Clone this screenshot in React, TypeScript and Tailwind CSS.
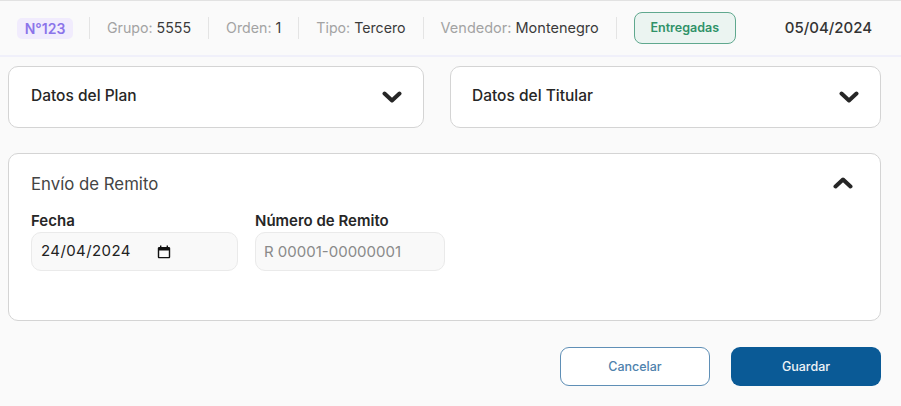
import React from 'react';

const Separator = () => <div className="w-px h-[22px] bg-[#e4e4e4] mx-[17px]" />;

const Chevron = ({ up = false }: { up?: boolean }) => (
  <svg width="20" height="12" viewBox="0 0 20 12" className={up ? 'rotate-180 -mt-[5px]' : ''}>
    <path d="M2.5 2.5 L10 9.5 L17.5 2.5" fill="none" stroke="#262626" strokeWidth="4" strokeLinecap="round" strokeLinejoin="round" />
  </svg>
);

const CalendarIcon = () => (
  <svg width="14" height="14" viewBox="0 0 14 14">
    <path d="M3 .5h1.4v1.4h5.2V.5H11v1.4h.8c.8 0 1.4.6 1.4 1.4v8.6c0 .8-.6 1.4-1.4 1.4H2.2c-.8 0-1.4-.6-1.4-1.400V3.300c0-.8.6-1.400 1.400-1.400H3V.5zM2.200 5.400v6.500h9.600V5.400H2.200z" fill="#111" />
  </svg>
);

const MetaItem = ({ label, value, size = 'text-[14.200px]' }: { label: string; value: string; size?: string }) => (
  <span className={`${size} whitespace-nowrap`}>
    <span className="text-[#a3a3a3]">{label}:</span> <span className="text-[#3a3a3a]">{value}</span>
  </span>
);

const CollapsedCard = ({ title, className }: { title: string; className: string }) => (
  <div className={`h-[62px] bg-white border border-[#d4d4d4] rounded-[10px] flex items-center justify-between pr-[21px] ${className}`}>
    <span className="text-[15.500px] font-medium text-[#262626] -mt-[2px]">{title}</span>
    <Chevron />
  </div>
);

export default function App() {
  return (
    <div className="w-[901px] h-[406px] overflow-hidden bg-[#fafafa] font-['Inter',sans-serif] border-t border-[#e2e2e2]">
      {/* Header */}
      <div className="h-[56px] flex items-center pl-[17px] border-b-2 border-[#f0f0fa]">
        <span className="w-[56px] h-[21px] rounded-[5px] bg-[#f1ecfd] text-[#8b74ea] text-[14px] font-semibold flex items-center justify-center mr-[-1px]">N°123</span>
        <Separator />
        <MetaItem label="Grupo" value="5555" />
        <Separator />
        <MetaItem label="Orden" value="1" />
        <Separator />
        <MetaItem label="Tipo" value="Tercero" />
        <Separator />
        <MetaItem label="Vendedor" value="Montenegro" size="text-[14.500px]" />
        <Separator />
        <span className="w-[102px] h-[32px] rounded-[8px] border border-[#5fa88e] bg-[#ebf4f1] text-[#2f9268] text-[12.500px] font-semibold flex items-center justify-center">Entregadas</span>
        <span className="ml-[49px] text-[15px] font-medium text-[#333333]">05/04/2024</span>
      </div>

      {/* Collapsed sections */}
      <div className="flex pl-[8px] pt-[9px]">
        <CollapsedCard title="Datos del Plan" className="w-[416px] pl-[22px]" />
        <CollapsedCard title="Datos del Titular" className="w-[431px] ml-[26px] pl-[21px]" />
      </div>

      {/* Envio de remito */}
      <div className="ml-[8px] mt-[25px] w-[873px] h-[168px] bg-white border border-[#d4d4d4] rounded-[10px] pl-[22px] pr-[27px] pt-[20px]">
        <div className="flex items-center justify-between h-[22px]">
          <span className="text-[16.800px] text-[#444444]">Envío de Remito</span>
          <Chevron up />
        </div>
        <div className="flex gap-[17px] mt-[16px]">
          <div className="w-[207px]">
            <label className="block text-[15px] font-semibold text-[#262626] leading-[17px] mb-[3px]">Fecha</label>
            <div className="h-[39px] rounded-[10px] border border-[#eaeaea] bg-[#f9f9f9] flex items-center pl-[9px] pr-[66px] justify-between">
              <span className="text-[15px] text-[#222222] tracking-[0.4px]">24/04/2024</span>
              <CalendarIcon />
            </div>
          </div>
          <div className="w-[190px]">
            <label className="block text-[15px] font-semibold text-[#262626] leading-[17px] mb-[3px] whitespace-nowrap">Número de Remito</label>
            <input
              readOnly
              placeholder="R 00001-00000001"
              className="w-full h-[39px] rounded-[10px] border border-[#eaeaea] bg-[#f9f9f9] px-[8px] text-[15px] placeholder:text-[#8a8a8a] outline-none"
            />
          </div>
        </div>
      </div>

      {/* Actions */}
      <div className="flex justify-end gap-[21px] pr-[20px] mt-[26px]">
        <button className="w-[150px] h-[39px] pt-[1px] rounded-[9px] border border-[#5f8fb6] bg-white text-[#4f82ad] text-[12.500px] font-medium">Cancelar</button>
        <button className="w-[150px] h-[39px] pt-[1px] rounded-[9px] bg-[#0a5a96] text-[#eef3f7] text-[12.500px] font-medium">Guardar</button>
      </div>
    </div>
  );
}
